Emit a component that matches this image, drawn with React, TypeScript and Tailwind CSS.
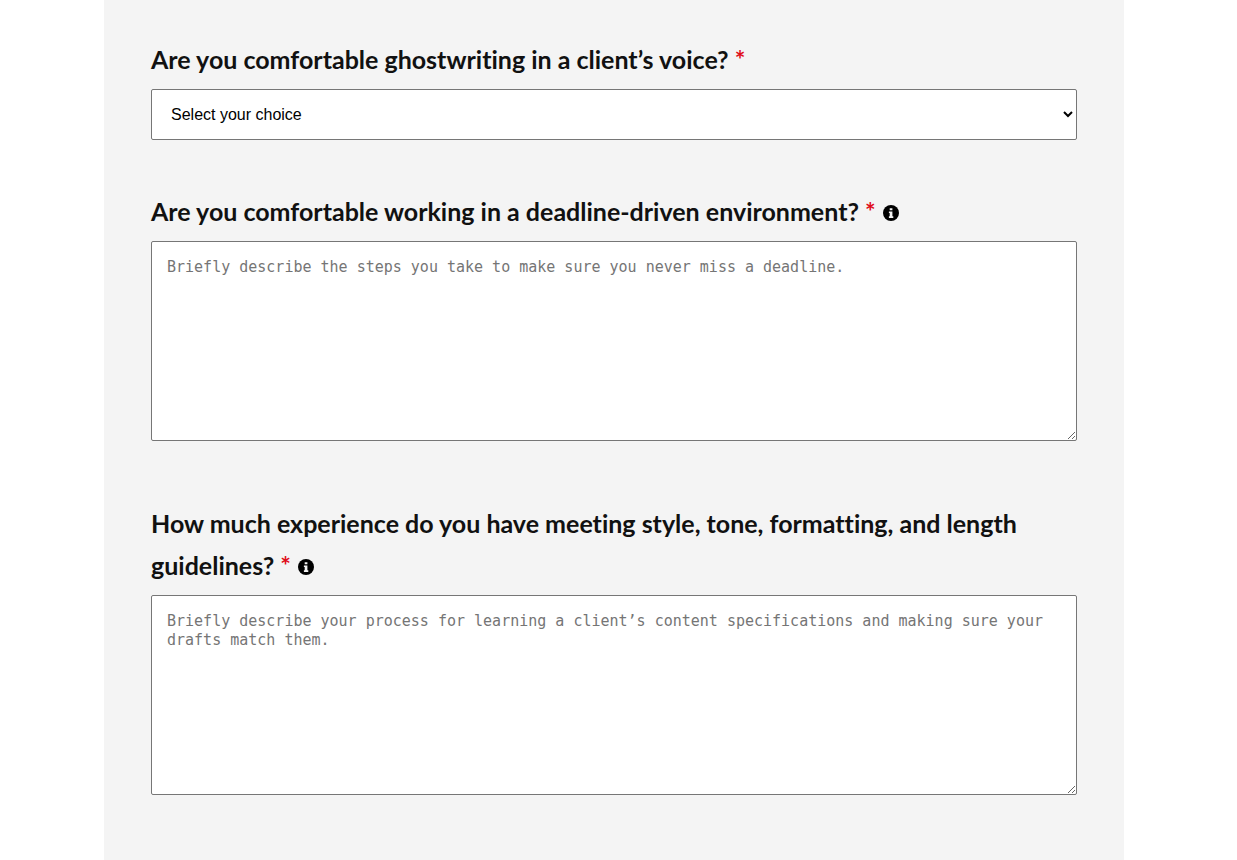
import { ReactNode } from 'react'

interface QuestionLabelProps {
  htmlFor: string
  children: ReactNode
  info?: boolean
}

function InfoIcon() {
  return (
    <svg viewBox="0 0 16 16" className="ml-px inline-block size-4 align-[0px]" aria-hidden="true">
      <circle cx="8" cy="8" r="8" fill="#000" />
      <path d="M6.7 3.2h2.7v2.1H6.7zM5.9 6.4h3.5v4.9h.9v1.8H5.9v-1.8h.8V8.1h-.8z" fill="#f4f4f4" />
    </svg>
  )
}

function QuestionLabel({ htmlFor, children, info = false }: QuestionLabelProps) {
  return (
    <label
      htmlFor={htmlFor}
      className="mb-[9px] block font-['Lato',sans-serif] text-[25px] leading-[42px] font-bold text-[#111] [font-variant-ligatures:none]"
    >
      {children} <span className="text-[#e00d1a]">*</span>
      {info && (
        <>
          {' '}
          <InfoIcon />
        </>
      )}
    </label>
  )
}

interface TextQuestionProps {
  id: string
  question: string
  placeholder: string
}

function TextQuestion({ id, question, placeholder }: TextQuestionProps) {
  return (
    <div className="mb-[61px]">
      <QuestionLabel htmlFor={id} info>
        {question}
      </QuestionLabel>
      <textarea
        id={id}
        required
        placeholder={placeholder}
        className="block h-[200px] w-full rounded-xs border border-[#767676] bg-white px-[15px] py-4 font-['DejaVu_Sans_Mono','Liberation_Mono',monospace] text-[15px] leading-[19px] placeholder:text-[#757575]"
      />
    </div>
  )
}

export default function App() {
  return (
    <div className="min-h-screen bg-white pr-[9px]">
      <form className="mx-auto min-h-screen max-w-[1020px] bg-[#f4f4f4] px-[47px] pt-[38px]">
        <div className="mb-[50px]">
          <QuestionLabel htmlFor="ghostwriting">
            Are you comfortable ghostwriting in a client’s voice?
          </QuestionLabel>
          <select
            id="ghostwriting"
            required
            defaultValue=""
            className="block h-[51px] w-full rounded-xs border border-[#767676] bg-white px-[15px] font-['Liberation_Sans',sans-serif] text-base text-black"
          >
            <option value="">Select your choice</option>
            <option value="yes">Yes</option>
            <option value="no">No</option>
          </select>
        </div>
        <TextQuestion
          id="deadlines"
          question="Are you comfortable working in a deadline-driven environment?"
          placeholder="Briefly describe the steps you take to make sure you never miss a deadline."
        />
        <TextQuestion
          id="guidelines"
          question="How much experience do you have meeting style, tone, formatting, and length guidelines?"
          placeholder="Briefly describe your process for learning a client’s content specifications and making sure your drafts match them."
        />
      </form>
    </div>
  )
}
